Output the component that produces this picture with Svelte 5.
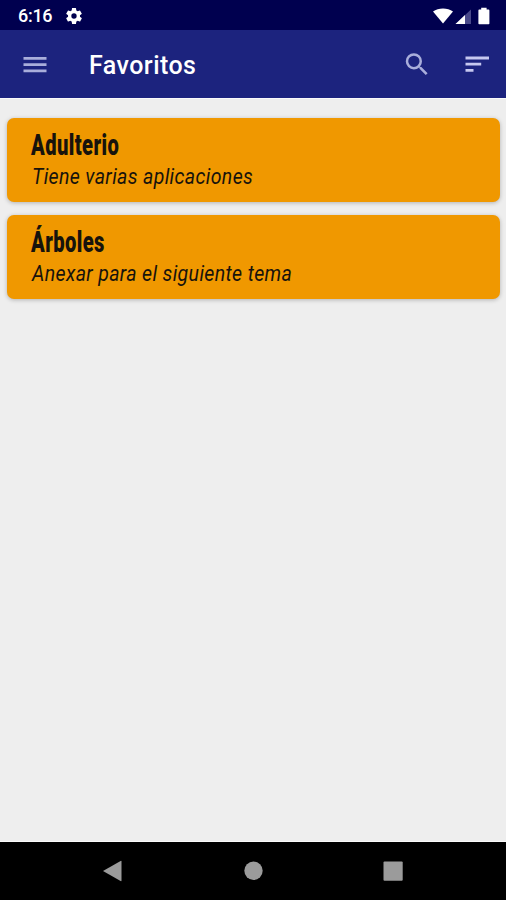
<script>
  let title = 'Favoritos';
  let time = '6:16';

  const favorites = [
    { name: 'Adulterio', note: 'Tiene varias aplicaciones' },
    { name: 'Árboles', note: 'Anexar para el siguiente tema' }
  ];
</script>

<style>
  :global(body) {
    margin: 0;
    background: #eee;
  }
  .screen {
    display: flex;
    flex-direction: column;
    width: 506px;
    height: 900px;
    overflow: hidden;
    background: #eee;
    font-family: Roboto, 'Liberation Sans', sans-serif;
  }
  svg {
    display: block;
    flex: none;
  }
  button {
    padding: 0;
    border: 0;
    background: transparent none;
    color: inherit;
    cursor: pointer;
  }
  .status {
    display: flex;
    align-items: center;
    flex: none;
    box-sizing: border-box;
    height: 30px;
    padding: 2px 14px 0 18px;
    background: #00004f;
    color: #fff;
  }
  .status__time {
    width: 46px;
    font-size: 18px;
    font-weight: 500;
    letter-spacing: -0.3px;
    line-height: 28px;
  }
  .status__icons {
    margin-left: auto;
  }
  .toolbar {
    display: flex;
    align-items: center;
    flex: none;
    box-sizing: border-box;
    height: 68px;
    padding: 2px 14px 0 21px;
    background: #1c237e;
    box-shadow: 0 1px 0 #fafafa;
    color: #a9aedb;
  }
  .toolbar h1 {
    flex: 1;
    margin: 2px 0 0 40px;
    color: #fff;
    font-size: 25px;
    font-weight: 500;
    letter-spacing: 0.45px;
    line-height: 32px;
  }
  .toolbar button + button {
    margin-left: 30px;
  }
  .list {
    display: flex;
    flex-direction: column;
    flex: 1;
    gap: 13px;
    padding: 20px 6px 0 7px;
  }
  .card {
    box-sizing: border-box;
    height: 84px;
    padding: 9px 24px 0;
    border-radius: 7px;
    background: #f09800;
    box-shadow: 0 1px 4px rgba(0, 0, 0, 0.25);
    color: #17130c;
  }
  .card h2,
  .card p {
    margin: 0;
    white-space: nowrap;
    transform-origin: 0 50%;
  }
  .card h2 {
    font-size: 29px;
    font-weight: 900;
    letter-spacing: 0.6px;
    line-height: 36px;
    transform: scaleX(0.695);
  }
  .card p {
    margin-left: 1px;
    font-size: 22px;
    font-style: italic;
    letter-spacing: 0.4px;
    line-height: 28px;
    transform: scaleX(0.887);
  }
  .nav {
    display: flex;
    justify-content: space-between;
    align-items: center;
    flex: none;
    box-sizing: border-box;
    height: 58px;
    padding: 0 102px;
    background: #000;
    box-shadow: 0 -1px 0 #fafafa;
    color: #9b9b9b;
  }
</style>

<div class="screen">
  <div class="status">
    <span class="status__time">{time}</span>
    <svg width="20" height="20" viewBox="0 0 24 24" fill="#fff">
      <path
        d="M19.14 12.94c.04-.3.06-.61.06-.94s-.02-.64-.07-.94l2.03-1.58a.49.49 0 0 0 .12-.61l-1.92-3.32a.49.49 0 0 0-.59-.22l-2.39.96c-.5-.38-1.03-.7-1.62-.94l-.36-2.54a.48.48 0 0 0-.48-.41h-3.84c-.24 0-.43.17-.47.41l-.36 2.54c-.59.24-1.13.57-1.62.94l-2.39-.96a.48.48 0 0 0-.59.22L2.74 8.87a.48.48 0 0 0 .12.61l2.03 1.58a7.3 7.3 0 0 0 0 1.88l-2.03 1.58a.49.49 0 0 0-.12.61l1.92 3.32c.12.22.37.29.59.22l2.39-.96c.5.38 1.03.7 1.62.94l.36 2.54c.05.24.24.41.48.41h3.84c.24 0 .44-.17.47-.41l.36-2.54c.59-.24 1.13-.56 1.62-.94l2.39.96c.22.08.47 0 .59-.22l1.92-3.32a.48.48 0 0 0-.12-.61zM12 15.2a3.2 3.2 0 1 1 0-6.4 3.2 3.2 0 0 1 0 6.4z" />
    </svg>
    <svg class="status__icons" width="60" height="20" viewBox="0 0 60 20" fill="#fff">
      <path d="M1 5.6C3.8 3.2 7.2 2.4 11 2.4s7.2.8 10 3.2L11 17.5z" />
      <path d="M39 3.5v14.5H23.5z" fill="#49498a" />
      <path d="M33 9v9h-9.5z" />
      <path d="M47.2 3.6h2V1.8h5.4v1.8h2q.8 0 .8.8v13q0 .8-.8.8h-9.4q-.8 0-.8-.8v-13q0-.8.8-.8z" />
    </svg>
  </div>

  <header class="toolbar">
    <button type="button" aria-label="Menu">
      <svg width="28" height="28" viewBox="0 0 28 28" fill="currentColor">
        <path d="M2.5 6h23v2.8h-23zM2.5 12.2h23V15h-23zM2.5 18.4h23v2.8h-23z" />
      </svg>
    </button>
    <h1>{title}</h1>
    <button type="button" aria-label="Buscar">
      <svg width="30" height="30" viewBox="0 0 24 24" fill="currentColor">
        <path
          d="M15.5 13.5h-.79l-.28-.27A6.47 6.47 0 0 0 16 9 6.5 6.5 0 1 0 9.5 15.5c1.61 0 3.09-.59 4.23-1.57l.27.28v.79l5 4.99 1.49-1.49zm-6 0a4.5 4.5 0 1 1 0-9 4.5 4.5 0 0 1 0 9z" />
      </svg>
    </button>
    <button type="button" aria-label="Ordenar">
      <svg width="30" height="30" viewBox="0 0 30 30" fill="#c6c8f0">
        <path d="M3.5 6.6H27v2.8H3.5zM3.5 12.8h15.7v2.8H3.5zM3.5 19h8v2.8h-8z" />
      </svg>
    </button>
  </header>

  <main class="list">
    {#each favorites as favorite}
      <article class="card">
        <h2>{favorite.name}</h2>
        <p>{favorite.note}</p>
      </article>
    {/each}
  </main>

  <nav class="nav">
    <svg width="22" height="22" viewBox="0 0 22 22" fill="currentColor">
      <path d="M1 11 18.6.9q.9-.4.9.6v19q0 1-.9.5z" />
    </svg>
    <svg width="22" height="22" viewBox="0 0 22 22" fill="currentColor">
      <circle cx="11.5" cy="10.8" r="9.2" />
    </svg>
    <svg width="22" height="22" viewBox="0 0 22 22" fill="currentColor">
      <rect x="1.5" y="1.5" width="19.2" height="19.2" rx="1" />
    </svg>
  </nav>
</div>
